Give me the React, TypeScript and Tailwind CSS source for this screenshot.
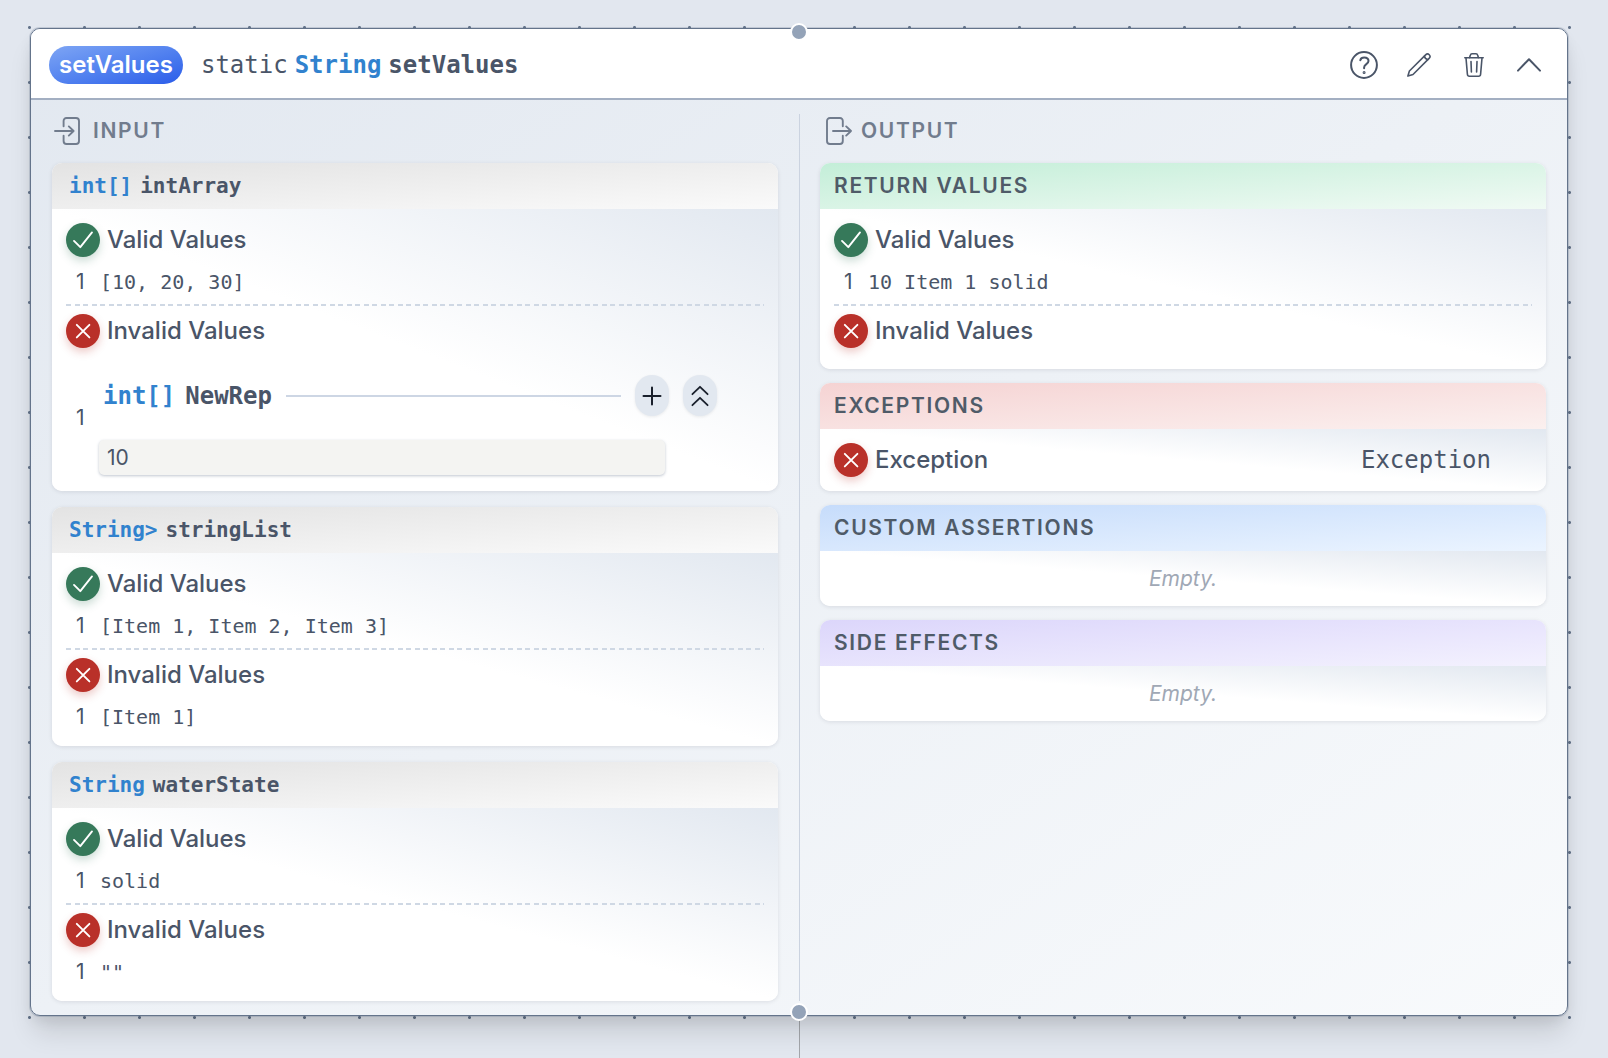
import type { ReactNode } from "react";

const MONO = "font-['DejaVu_Sans_Mono','Liberation_Mono',monospace]";

function HelpIcon() {
  return (
    <svg width="28" height="28" viewBox="0 0 28 28" fill="none" stroke="currentColor" strokeWidth="2" strokeLinecap="round" strokeLinejoin="round" aria-hidden="true">
      <circle cx="14" cy="14" r="12.9" />
      <path d="M10.3 9.2C10.8 7.4 12.2 6.6 14.2 6.6C16.7 6.6 18.5 8 18.5 10.1C18.5 13.1 14.1 13.2 14.1 16.4V17.3" />
      <circle cx="14.1" cy="21.4" r="0.5" fill="currentColor" />
    </svg>
  );
}

function PencilIcon() {
  return (
    <svg width="24" height="24" viewBox="0 0 24 24" fill="none" stroke="currentColor" strokeWidth="1.6" strokeLinecap="round" strokeLinejoin="round" aria-hidden="true">
      <path d="M0.9 23.1L2.4 18L18.6 1.9C19.7 0.8 21.1 0.6 22.2 1.7C23.3 2.8 23.2 4.3 22.1 5.4L6 21.5Z" />
      <path d="M17.4 3.2C17.7 5 18.9 6.3 20.7 6.6" />
    </svg>
  );
}

function TrashIcon() {
  return (
    <svg width="20" height="24" viewBox="0 0 20 24" fill="none" stroke="currentColor" strokeWidth="1.6" strokeLinecap="round" strokeLinejoin="round" aria-hidden="true">
      <path d="M0.8 4.8H19.2" />
      <path d="M5.6 4.6L6.4 2C6.6 1.2 7.2 0.8 8 0.8H12C12.8 0.8 13.4 1.2 13.6 2L14.4 4.6" />
      <path d="M2 5L3.4 21.3C3.5 22.5 4.2 23.2 5.4 23.2H14.6C15.8 23.2 16.5 22.5 16.6 21.3L18 5" />
      <path d="M7 8.5L7.4 19M13 8.5L12.6 19" />
    </svg>
  );
}

function ChevronUpIcon() {
  return (
    <svg width="24" height="14" viewBox="0 0 24 14" fill="none" stroke="currentColor" strokeWidth="2" strokeLinecap="round" strokeLinejoin="round" aria-hidden="true">
      <path d="M1 12.6L12 1.2L23 12.6" />
    </svg>
  );
}

function EnterIcon() {
  return (
    <svg width="26" height="28" viewBox="0 0 26 28" fill="none" stroke="currentColor" strokeWidth="1.9" strokeLinecap="round" strokeLinejoin="round" aria-hidden="true">
      <path d="M9.6 9.2V4C9.6 2.2 10.7 1 12.5 1H22C23.8 1 25 2.2 25 4V24C25 25.8 23.8 27 22 27H12.5C10.7 27 9.6 25.8 9.6 24V18.8" />
      <path d="M1 14H19.6M14.8 9.4L19.6 14L14.8 18.6" />
    </svg>
  );
}

function ExitIcon() {
  return (
    <svg width="26" height="28" viewBox="0 0 26 28" fill="none" stroke="currentColor" strokeWidth="1.9" strokeLinecap="round" strokeLinejoin="round" aria-hidden="true">
      <path d="M16.8 9.2V4C16.8 2.2 15.7 1 13.9 1H4C2.2 1 1 2.2 1 4V24C1 25.8 2.2 27 4 27H13.9C15.7 27 16.8 25.8 16.8 24V18.8" />
      <path d="M7 14H25M20.2 9.4L25 14L20.2 18.6" />
    </svg>
  );
}

function ValidBadge() {
  return (
    <span className="size-[34px] shrink-0 rounded-full bg-[#36795a] text-white shadow-[0_4px_8px_rgba(54,121,90,0.25)]">
      <svg width="34" height="34" viewBox="0 0 34 34" fill="none" stroke="currentColor" strokeWidth="1.9" strokeLinecap="round" strokeLinejoin="round" aria-hidden="true">
        <path d="M8 17.9L14.3 24.2L26 9.4" />
      </svg>
    </span>
  );
}

function InvalidBadge() {
  return (
    <span className="size-[34px] shrink-0 rounded-full bg-[#b93029] text-white shadow-[0_4px_8px_rgba(185,48,41,0.25)]">
      <svg width="34" height="34" viewBox="0 0 34 34" fill="none" stroke="currentColor" strokeWidth="1.9" strokeLinecap="round" aria-hidden="true">
        <path d="M10.8 10.8L23.4 23.4M23.4 10.8L10.8 23.4" />
      </svg>
    </span>
  );
}

function Handle({ side }: { side: "top" | "bottom" }) {
  return (
    <span
      className={`absolute left-1/2 size-[18px] -translate-x-1/2 rounded-full border-2 border-white bg-[#94a3b8] ${
        side === "top" ? "-top-1.5" : "-bottom-1.5"
      }`}
    />
  );
}

function Panel({ head, headClass, children }: { head: ReactNode; headClass: string; children: ReactNode }) {
  return (
    <section className="overflow-hidden rounded-[10px] bg-white shadow-[0_1px_4px_rgba(15,23,42,0.1)]">
      <h3 className={`flex h-[46px] items-center bg-linear-to-br text-[21px] leading-7 ${headClass}`}>{head}</h3>
      <div className="bg-linear-to-bl from-[#e2e8f0] to-white to-50%">{children}</div>
    </section>
  );
}

function TitledPanel({ title, tint, children }: { title: string; tint: string; children: ReactNode }) {
  return (
    <Panel head={title} headClass={`px-3.5 font-semibold uppercase tracking-[0.08em] text-[#4f5b68] ${tint}`}>
      {children}
    </Panel>
  );
}

function ValueRow({ index, children }: { index: number; children: ReactNode }) {
  return (
    <li className="flex items-center gap-3.5 pt-[5px] pl-2.5 text-[21px] leading-7">
      <span className="w-2.5 shrink-0">{index}</span>
      {children}
    </li>
  );
}

function TextValue({ index, text }: { index: number; text: string }) {
  return (
    <ValueRow index={index}>
      <span className={`text-[20px] ${MONO}`}>{text}</span>
    </ValueRow>
  );
}

function Values({ valid, invalid }: { valid: ReactNode; invalid?: ReactNode }) {
  return (
    <div className="px-3.5 pt-3.5 pb-[15px]">
      <h4 className="flex items-center gap-[7px] text-[24px] leading-[34px] font-medium">
        <ValidBadge />
        Valid Values
      </h4>
      <ul className="pt-1.5">{valid}</ul>
      <div className="my-2 h-0.5 bg-[repeating-linear-gradient(90deg,#cfd8e4_0_5px,transparent_5px_9px,#cfd8e4_9px_14px,transparent_14px_17px)]" />
      <h4 className="flex items-center gap-[7px] text-[24px] leading-[34px] font-medium">
        <InvalidBadge />
        Invalid Values
      </h4>
      <ul className="pt-1.5">{invalid}</ul>
    </div>
  );
}

function ParameterPanel({ type, name, children }: { type: string; name: string; children: ReactNode }) {
  return (
    <Panel
      headClass={`gap-2 from-[#e3e3e3] to-[#fafafa] px-[17px] font-bold ${MONO}`}
      head={
        <>
          <span className="text-[#3182ce]">{type}</span>
          <span>{name}</span>
        </>
      }
    >
      {children}
    </Panel>
  );
}

function RepresentationEditor() {
  return (
    <div className="mr-[47px] min-w-0 flex-1 pt-4 pb-px">
      <div className="flex items-center pl-[3px]">
        <span className={`text-[24px] leading-8 font-bold text-[#3182ce] ${MONO}`}>int[]</span>
        <span className={`ml-2.5 text-[24px] leading-8 font-bold ${MONO}`}>NewRep</span>
        <span className="mx-3.5 h-0.5 flex-1 bg-[#cdd6e4]" />
        <button type="button" aria-label="Add value" className="flex h-[41px] w-[34px] items-center justify-center rounded-full bg-[#e2e8f0] text-[#1a202c] shadow-[0_1px_3px_rgba(15,23,42,0.08)]">
          <svg width="20" height="20" viewBox="0 0 20 20" fill="none" stroke="currentColor" strokeWidth="2" strokeLinecap="round" aria-hidden="true">
            <path d="M10 1.5V18.5M1.5 10H18.5" />
          </svg>
        </button>
        <button type="button" aria-label="Collapse representation" className="ml-3.5 flex h-[41px] w-[34px] items-center justify-center rounded-full bg-[#e2e8f0] text-[#1a202c] shadow-[0_1px_3px_rgba(15,23,42,0.08)]">
          <svg width="18" height="22" viewBox="0 0 18 22" fill="none" stroke="currentColor" strokeWidth="1.8" strokeLinecap="round" strokeLinejoin="round" aria-hidden="true">
            <path d="M1.4 9.2L9 1.8L16.6 9.2M1.4 20.2L9 12.8L16.6 20.2" />
          </svg>
        </button>
      </div>
      <div className="mt-6 mr-[52px] -ml-px">
        <input
          type="text"
          aria-label="NewRep value"
          defaultValue="10"
          className="block h-[35px] w-full rounded-[5px] bg-[#f4f4f2] px-2 text-[21px] leading-7 shadow-[0_1px_3px_rgba(100,116,139,0.4)] outline-none"
        />
      </div>
    </div>
  );
}

function EmptyNote() {
  return <p className="pt-3.5 pb-[13px] text-center text-[21px] leading-7 text-[#a0a8b5] italic">Empty.</p>;
}

function ColumnTitle({ icon, children }: { icon: ReactNode; children: ReactNode }) {
  return (
    <h2 className="flex items-center text-[21px] leading-7 font-semibold tracking-[0.08em] text-[#717c8d] uppercase">
      {icon}
      {children}
    </h2>
  );
}

export default function App() {
  return (
    <div className="flex min-h-screen flex-col bg-[#e2e7ef] bg-[radial-gradient(circle_at_center,#64748b_1px,transparent_2px)] bg-size-[55px_55px] bg-position-[2px_0px] pt-7 pr-10 pl-[30px] font-['Inter',sans-serif] text-[#4a5568]">
      <article className="relative rounded-[10px] border border-[#64748b] bg-linear-to-br from-[#e2e8f0] to-[#f8fafc] shadow-[0_0_0_1px_rgba(100,116,139,0.25),0_20px_26px_-4px_rgba(0,0,0,0.12),0_6px_14px_-2px_rgba(0,0,0,0.08)]">
        <header className="flex h-[71px] items-center rounded-t-[9px] border-b-2 border-[#a3afc2] bg-white pt-0.5 pr-6 pl-[18px]">
          <span className="rounded-full bg-linear-to-br from-[#7ea5f4] to-[#2b5ce9] px-2.5 text-[24px] leading-[38px] font-semibold text-white">
            setValues
          </span>
          <h1 className={`ml-[18px] flex gap-[7px] text-[24px] leading-8 ${MONO}`}>
            <span className="font-normal">static</span>
            <span className="font-bold text-[#3182ce]">String</span>
            <span className="font-bold">setValues</span>
          </h1>
          <div className="ml-auto flex items-center gap-[27px]">
            <button type="button" aria-label="Help" className="flex w-7 justify-center">
              <HelpIcon />
            </button>
            <button type="button" aria-label="Edit" className="flex w-7 justify-center">
              <PencilIcon />
            </button>
            <button type="button" aria-label="Delete" className="flex w-7 justify-center">
              <TrashIcon />
            </button>
            <button type="button" aria-label="Collapse" className="flex w-7 justify-center">
              <ChevronUpIcon />
            </button>
          </div>
        </header>

        <div className="grid grid-cols-2 py-3.5">
          <div className="px-[21px] pt-[3px]">
            <ColumnTitle icon={<span className="mr-[13px] ml-0.5"><EnterIcon /></span>}>Input</ColumnTitle>
            <div className="mt-[18px] flex flex-col gap-4">
              <ParameterPanel type="int[]" name="intArray">
                <Values
                  valid={<TextValue index={1} text="[10, 20, 30]" />}
                  invalid={
                    <ValueRow index={1}>
                      <RepresentationEditor />
                    </ValueRow>
                  }
                />
              </ParameterPanel>
              <ParameterPanel type="String>" name="stringList">
                <Values
                  valid={<TextValue index={1} text="[Item 1, Item 2, Item 3]" />}
                  invalid={<TextValue index={1} text="[Item 1]" />}
                />
              </ParameterPanel>
              <ParameterPanel type="String" name="waterState">
                <Values valid={<TextValue index={1} text="solid" />} invalid={<TextValue index={1} text={'""'} />} />
              </ParameterPanel>
            </div>
          </div>

          <div className="border-l border-[#cbd3e0] pt-[3px] pr-[21px] pl-5">
            <ColumnTitle icon={<span className="mr-[9px] ml-1.5"><ExitIcon /></span>}>Output</ColumnTitle>
            <div className="mt-[18px] flex flex-col gap-3.5">
              <TitledPanel title="Return Values" tint="from-[#c3eed8] to-[#f0faf4]">
                <Values valid={<TextValue index={1} text="10 Item 1 solid" />} />
              </TitledPanel>
              <TitledPanel title="Exceptions" tint="from-[#f5d3d3] to-[#fbf0ef]">
                <div className="flex items-center gap-[7px] py-3.5 pr-[55px] pl-3.5 text-[24px] leading-[34px]">
                  <InvalidBadge />
                  <span className="font-medium">Exception</span>
                  <span className={`ml-auto ${MONO}`}>Exception</span>
                </div>
              </TitledPanel>
              <TitledPanel title="Custom Assertions" tint="from-[#c6dcfb] to-[#ebf4ff]">
                <EmptyNote />
              </TitledPanel>
              <TitledPanel title="Side Effects" tint="from-[#dcd6fb] to-[#f3f1fe]">
                <EmptyNote />
              </TitledPanel>
            </div>
          </div>
        </div>

        <Handle side="top" />
        <Handle side="bottom" />
      </article>
      <div className="-mr-px w-px flex-1 self-center bg-[#a3a6ab]" />
    </div>
  );
}
